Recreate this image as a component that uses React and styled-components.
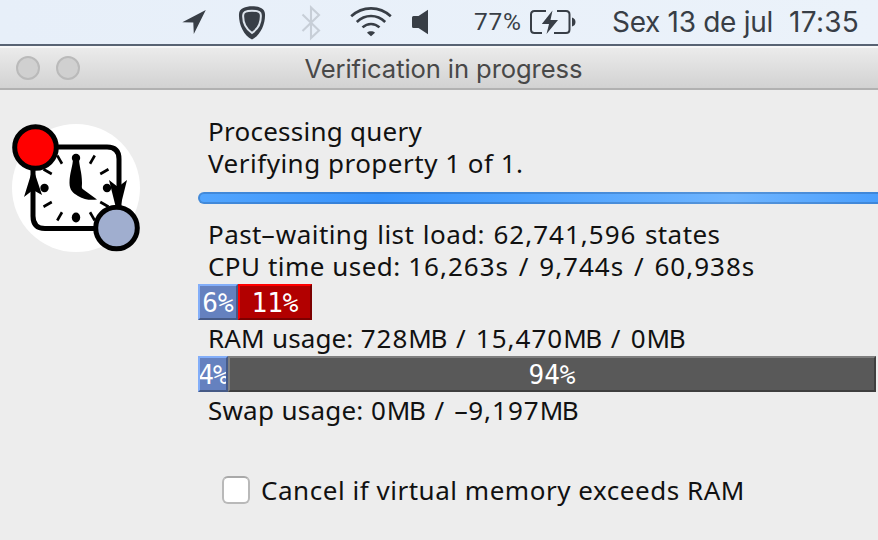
import React from "react";
import styled, { createGlobalStyle } from "styled-components";

const Global = createGlobalStyle`
  * { box-sizing: border-box; }
  body { margin: 0; background: #ededed; overflow: hidden; }
`;

const Screen = styled.div`
  width: 878px;
  height: 540px;
  display: flex;
  flex-direction: column;
  overflow: hidden;
  background: #ededed;
`;

const MenuBar = styled.header`
  height: 46px;
  flex: none;
  display: flex;
  align-items: flex-start;
  border-bottom: 2px solid #586373;
  background: linear-gradient(90deg, #e7eff9, #ebf2fa);
  color: #383e46;
  svg { display: block; flex: none; }
`;

const StatusIcons = styled.svg`
  width: 260px;
  height: 44px;
  margin-left: 178px;
`;

const MenuText = styled.span`
  font: ${(p) => p.$size}px/44px ${(p) => p.$font || "Inter"}, sans-serif;
  letter-spacing: ${(p) => p.$spacing}px;
  margin-left: ${(p) => p.$gap}px;
  width: ${(p) => p.$width}px;
  flex: none;
  white-space: nowrap;
`;

const TitleBar = styled.div`
  height: 44px;
  flex: none;
  display: flex;
  align-items: center;
  border-top: 2px solid #f7f7f7;
  border-bottom: 2px solid #b1b1b1;
  background: linear-gradient(#ebebeb, #d2d2d2);
  padding-left: 16px;
  gap: 16px;
`;

const WindowButton = styled.span`
  width: 24px;
  height: 24px;
  flex: none;
  border-radius: 50%;
  border: 2px solid #bababa;
  background: #d0d0d0;
`;

const Title = styled.h1`
  margin: 0 0 0 208.5px;
  padding-top: 2px;
  font: 400 25.6px/40px Inter, sans-serif;
  letter-spacing: -0.1px;
  color: #484848;
  white-space: nowrap;
`;

const Content = styled.main`
  display: flex;
  flex: 1;
`;

const LogoColumn = styled.div`
  width: 198px;
  flex: none;
  padding-top: 30px;
  svg { display: block; }
`;

const Details = styled.div`
  width: 680px;
  flex: none;
  padding-top: 25px;
  display: flex;
  flex-direction: column;
`;

const Line = styled.div`
  height: ${(p) => p.$height || 32}px;
  flex: none;
  padding-left: ${(p) => p.$indent || 10}px;
  padding-top: ${(p) => p.$drop || 0}px;
  font: 26px/32px "Noto Sans", sans-serif;
  letter-spacing: ${(p) => p.$spacing}px;
  word-spacing: ${(p) => p.$words || 0}px;
  color: #111;
  white-space: pre;
`;

const Digits = styled.span`
  letter-spacing: 1px;
`;

const Unit = styled.span`
  letter-spacing: -1.5px;
`;

const Slash = styled.span`
  margin: 0 2.75px;
`;

const Dash = styled.span`
  display: inline-block;
  margin: 0 2.5px;
  transform: scaleX(1.8);
`;

const Progress = styled.div`
  height: 12px;
  flex: none;
  margin: 13px -8px 14px 0;
  border-radius: 6px;
  border: 2px solid rgba(40, 90, 150, 0.35);
  background: linear-gradient(90deg, #52a5fe 0, #3893fc 180px, #4aa0fe 320px, #6fb5ff 535px, #4a9ffd 680px) border-box;
`;

const Meter = styled.div`
  display: flex;
  height: 36px;
  flex: none;
  margin-top: ${(p) => p.$top || 0}px;
`;

const tones = {
  blue: ["#6581bf", "#83aef9", "#465a86"],
  red: ["#b20000", "#ff0000", "#7c0000"],
  gray: ["#595959", "#7f7f7f", "#3e3e3e"],
};

const Segment = styled.div`
  width: ${(p) => p.$width}px;
  flex: none;
  border: 2px solid;
  border-color: ${(p) => `${tones[p.$tone][1]} ${tones[p.$tone][2]} ${tones[p.$tone][2]} ${tones[p.$tone][1]}`};
  background: ${(p) => tones[p.$tone][0]};
  color: #fff;
  display: flex;
  justify-content: center;
  overflow: hidden;
  font: 26px/34px "DejaVu Sans Mono", monospace;
  letter-spacing: ${(p) => p.$spacing || 0}px;
`;

const CheckRow = styled.label`
  display: flex;
  align-items: center;
  height: 32px;
  margin: 50px 0 0 24px;
`;

const Box = styled.span`
  width: 28px;
  height: 28px;
  flex: none;
  border: 2px solid #b9b9b9;
  border-top-color: #a9a9a9;
  border-radius: 6px;
  background: #fff;
`;

function MenuIcons() {
  return (
    <StatusIcons viewBox="178 0 260 44" fill="#383e46">
      <path d="M205.8 10 193.8 34 193.3 22.6 182.3 22.2Z" />
      <path d="M252 6.2C258 6.2 265 8 265 14C265.5 24 260.500 35 252 39.500C243.500 35 238.500 24 239 14C239 8 246 6.2 252 6.2Z" />
      <path d="M252 10.8C257.500 10.8 260.800 11.600 260.800 15C261.200 22 258 28.800 252 33C246 28.800 242.800 22 243.200 15C243.200 11.600 246.500 10.8 252 10.8Z" stroke="#dde4ec" strokeWidth="2" />
      <path d="M302.500 14.500 319 30.500 311 38V7.500L319 15 302.500 31" fill="none" stroke="#c7ced7" strokeWidth="2.1" />
      <g fill="none" stroke="#383e46" strokeWidth="2.6">
        <path d="M351.200 16.300C362.500 5.700 379.500 5.700 390.800 16.300" />
        <path d="M356.800 22C365 14 377 14 385.200 22" />
        <path d="M362.500 27.400C367.500 22.800 374.500 22.800 379.500 27.400" />
      </g>
      <path d="M367 32.700C369 30.800 373 30.800 375 32.700L371 36.300Z" />
      <path d="M413.500 16H418.500L428 9.700V34.200L418.500 28H413.500Q412 28 412 26.500V17.500Q412 16 413.500 16Z" />
    </StatusIcons>
  );
}

function Battery() {
  return (
    <svg width="48" height="44" viewBox="529 0 48 44" fill="#383e46">
      <path d="M546 11H534.500Q531 11 531 14.500V29.500Q531 33 534.500 33H542M557 11H566Q569.500 11 569.500 14.500V29.500Q569.500 33 566 33H554" fill="none" stroke="#383e46" strokeWidth="2" />
      <path d="M552.500 10.500 541.800 24H549L546.500 34 558 20H550.500ZM572 17.500Q575.500 18.500 575.500 22T572 26.500Z" />
    </svg>
  );
}

function Logo() {
  const ticks = [30, 60, 120, 150, 210, 240, 300, 330];
  return (
    <svg width="150" height="136" viewBox="0 120 150 136">
      <circle cx="76" cy="188" r="64" fill="#fff" />
      <g fill="none" stroke="#000">
        <path d="M36 147H107Q119 147 119 159V214M116 228.500H45Q33 228.500 33 216V170" strokeWidth="5" />
        <g strokeWidth="2.6">
          {ticks.map((a) => (
            <path key={a} d="M76 150.500V160" transform={`rotate(${a} 76 188)`} />
          ))}
        </g>
      </g>
      <circle cx="76" cy="158" r="4.2" />
      <ellipse cx="76" cy="217.500" rx="4.200" ry="5" />
      <circle cx="44.500" cy="188" r="4.2" />
      <circle cx="107" cy="188" r="4.2" />
      <path d="M73 158C73 166 69.500 173 69.500 183C69.500 190 73 193 78 196C84 199.500 90 200.500 97 199.500L84 190C81 188 82 187 82 183C82 172 79 166 79 158Z" />
      <path d="M33 168 24 197 33 190 42 195ZM118 216 109 180 118 187 127 180Z" />
      <circle cx="35.500" cy="147.500" r="20.800" fill="#f00" stroke="#000" strokeWidth="5" />
      <circle cx="116.500" cy="228" r="20.800" fill="#a0aecf" stroke="#000" strokeWidth="5" />
    </svg>
  );
}

// Figures are tracked wider than letters, units tighter, and hyphens are drawn long.
function Caption({ text }) {
  return text.split(/([\d,]+|-|\/|MB)/).map((part, i) => {
    if (part === "-") return <Dash key={i}>-</Dash>;
    if (part === "/") return <Slash key={i}>/</Slash>;
    if (part === "MB") return <Unit key={i}>MB</Unit>;
    return /^\d/.test(part) ? <Digits key={i}>{part}</Digits> : part;
  });
}

export default function App() {
  return (
    <Screen>
      <Global />
      <MenuBar>
        <MenuIcons />
        <MenuText $font="Roboto" $size={24.5} $spacing={0.7} $gap={36} $width={55}>77%</MenuText>
        <Battery />
        <MenuText $size={28} $spacing={-0.3} $gap={35} $width={177}>Sex 13 de jul</MenuText>
        <MenuText $size={28} $spacing={0.3} $gap={0} $width={80}>17:35</MenuText>
      </MenuBar>
      <TitleBar>
        <WindowButton />
        <WindowButton />
        <Title>Verification in progress</Title>
      </TitleBar>
      <Content>
        <LogoColumn><Logo /></LogoColumn>
        <Details>
          <Line $spacing={0.25}>Processing query</Line>
          <Line $spacing={0.5}>Verifying property 1 of 1.</Line>
          <Progress />
          <Line $spacing={0.45} $words={1.25}><Caption text="Past-waiting list load: 62,741,596 states" /></Line>
          <Line $spacing={0.4} $words={0.5}><Caption text="CPU time used: 16,263s / 9,744s / 60,938s" /></Line>
          <Meter $top={2}>
            <Segment $tone="blue" $width={40}>6%</Segment>
            <Segment $tone="red" $width={74}>11%</Segment>
          </Meter>
          <Line $spacing={0.1} $words={0.5} $height={36} $drop={2}><Caption text="RAM usage: 728MB / 15,470MB / 0MB" /></Line>
          <Meter>
            <Segment $tone="blue" $width={30} $spacing={-1}>4%</Segment>
            <Segment $tone="gray" $width={648}>94%</Segment>
          </Meter>
          <Line $spacing={0.2} $words={0.5} $drop={2}><Caption text="Swap usage: 0MB / -9,197MB" /></Line>
          <CheckRow>
            <Box />
            <Line as="span" $indent={11} $spacing={0.53}>Cancel if virtual memory exceeds RAM</Line>
          </CheckRow>
        </Details>
      </Content>
    </Screen>
  );
}
